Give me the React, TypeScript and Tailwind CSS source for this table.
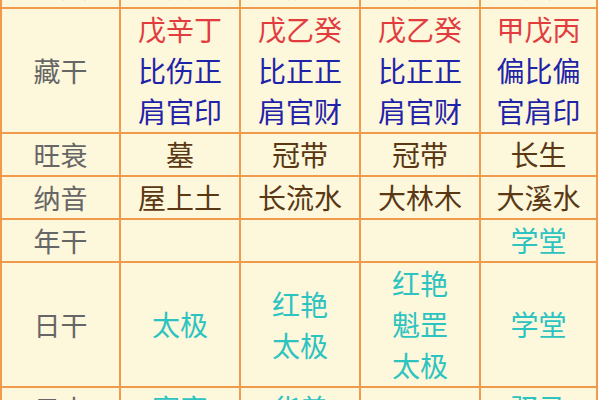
import React from 'react';

type Cell = { lines: string[]; color?: string }[] | null;

const RED = 'text-[#e23c3f]';
const BLUE = 'text-[#1f23a8]';
const BROWN = 'text-[#5a3814]';
const CYAN = 'text-[#2cc3c0]';
const GREEN = 'text-[#7cc85a]';

interface Row {
  label: string;
  cells: Cell[];
}

const rows: Row[] = [
  {
    label: '地支',
    cells: [
      [{ lines: ['戌'], color: GREEN }],
      [{ lines: ['辰'], color: GREEN }],
      [{ lines: ['辰'], color: GREEN }],
      [{ lines: ['寅'], color: GREEN }],
    ],
  },
  {
    label: '藏干',
    cells: [
      [
        { lines: ['戊辛丁'], color: RED },
        { lines: ['比伤正', '肩官印'], color: BLUE },
      ],
      [
        { lines: ['戊乙癸'], color: RED },
        { lines: ['比正正', '肩官财'], color: BLUE },
      ],
      [
        { lines: ['戊乙癸'], color: RED },
        { lines: ['比正正', '肩官财'], color: BLUE },
      ],
      [
        { lines: ['甲戊丙'], color: RED },
        { lines: ['偏比偏', '官肩印'], color: BLUE },
      ],
    ],
  },
  {
    label: '旺衰',
    cells: [
      [{ lines: ['墓'], color: BROWN }],
      [{ lines: ['冠带'], color: BROWN }],
      [{ lines: ['冠带'], color: BROWN }],
      [{ lines: ['长生'], color: BROWN }],
    ],
  },
  {
    label: '纳音',
    cells: [
      [{ lines: ['屋上土'], color: BROWN }],
      [{ lines: ['长流水'], color: BROWN }],
      [{ lines: ['大林木'], color: BROWN }],
      [{ lines: ['大溪水'], color: BROWN }],
    ],
  },
  {
    label: '年干',
    cells: [null, null, null, [{ lines: ['学堂'], color: CYAN }]],
  },
  {
    label: '日干',
    cells: [
      [{ lines: ['太极'], color: CYAN }],
      [{ lines: ['红艳', '太极'], color: CYAN }],
      [{ lines: ['红艳', '魁罡', '太极'], color: CYAN }],
      [{ lines: ['学堂'], color: CYAN }],
    ],
  },
  {
    label: '日支',
    cells: [
      [{ lines: ['寡宿'], color: CYAN }],
      [{ lines: ['华盖'], color: CYAN }],
      null,
      [{ lines: ['驿马'], color: CYAN }],
    ],
  },
];

const App: React.FC = () => {
  return (
    <div
      className="w-[600px] h-[400px] overflow-hidden bg-white"
      style={{ fontFamily: '"Noto Sans CJK SC", "Noto Sans", sans-serif' }}
    >
      <div className="-mt-[36px] w-[598px] bg-[#f19a4c] p-[2px] grid grid-cols-[117px_118px_118px_118px_115px] gap-[2px]">
        {rows.map((row) => (
          <React.Fragment key={row.label}>
            <div className="bg-[#fdf7dc] flex items-center justify-center text-[27px] leading-[41px] text-[#666666]">
              {row.label}
            </div>
            {row.cells.map((cell, i) => (
              <div
                key={i}
                className="bg-[#fdf7dc] flex flex-col items-center justify-center text-[28px] leading-[41px] min-h-[41px]"
              >
                {cell &&
                  cell.map((part, j) =>
                    part.lines.map((line, k) => (
                      <div key={`${j}-${k}`} className={part.color}>
                        {line}
                      </div>
                    ))
                  )}
              </div>
            ))}
          </React.Fragment>
        ))}
      </div>
    </div>
  );
};

export default App;
